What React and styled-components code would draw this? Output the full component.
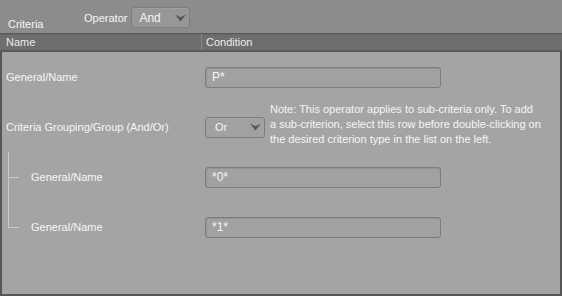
import React from 'react'
import styled, { createGlobalStyle } from 'styled-components'

const GlobalStyle = createGlobalStyle`
  html, body {
    margin: 0;
    padding: 0;
    background: #a4a4a4;
  }
  * {
    box-sizing: border-box;
  }
`

const Page = styled.div`
  width: 562px;
  height: 296px;
  display: flex;
  flex-direction: column;
  font-family: "Liberation Sans", Arial, sans-serif;
  font-size: 11px;
  color: #f6f6f6;
  overflow: hidden;
`

const TopBar = styled.div`
  height: 33px;
  flex: none;
  background: #8c8c8c;
  display: flex;
  align-items: flex-start;
  padding-left: 8px;
`

const Title = styled.div`
  margin-top: 18px;
  width: 76px;
`

const OperatorGroup = styled.div`
  display: flex;
  align-items: center;
  gap: 4px;
  margin-top: 7px;
`

const Select = styled.div`
  width: ${p => p.$width}px;
  height: 21px;
  display: flex;
  align-items: center;
  justify-content: space-between;
  padding: 0 3px 0 ${p => p.$pad}px;
  border: 1px solid ${p => p.$border};
  border-radius: 3px;
  background: ${p => p.$bg};
  box-shadow: inset 0 1px 0 rgba(255, 255, 255, 0.08);
  font-size: ${p => p.$size}px;
`

const Arrow = () => (
  <svg width="11" height="8" viewBox="0 0 11 8">
    <path d="M0 0.5 L5.5 3.2 L11 0.5 L5.5 7.5 Z" fill="#555" />
  </svg>
)

const Table = styled.div`
  flex: 1;
  display: flex;
  flex-direction: column;
  border-left: 2px solid #565656;
  border-right: 2px solid #565656;
  border-bottom: 2px solid #565656;
`

const HeaderRow = styled.div`
  height: 19px;
  flex: none;
  display: grid;
  grid-template-columns: 201px 1fr;
  background: #6e6e6e;
  border-top: 1px solid #595959;
  border-bottom: 2px solid #5a5a5a;
  margin-left: -2px;
  margin-right: -2px;
  box-shadow: inset 0 1px 0 #666;
`

const HeaderCell = styled.div`
  display: flex;
  align-items: center;
  padding-left: ${p => p.$pad}px;
  border-left: ${p => (p.$divider ? '1px solid #8a8a8a' : 'none')};
  color: #ececec;
`

const Body = styled.div`
  flex: 1;
  display: flex;
  flex-direction: column;
  background: #a4a4a4;
`

const Row = styled.div`
  height: 50px;
  display: grid;
  grid-template-columns: 203px 1fr;
  align-items: center;
`

const NameCell = styled.div`
  position: relative;
  height: 100%;
  display: flex;
  align-items: center;
  padding-left: ${p => (p.$branch ? 29 : 4)}px;

  &::before {
    content: ${p => (p.$branch ? "''" : 'none')};
    position: absolute;
    left: 6px;
    top: 0;
    width: 1px;
    height: ${p => (p.$branch === 'last' ? '50%' : '100%')};
    background: #c9c9c9;
  }

  &::after {
    content: ${p => (p.$branch ? "''" : 'none')};
    position: absolute;
    left: 6px;
    top: 50%;
    width: 11px;
    height: 1px;
    background: #c9c9c9;
  }
`

const ConditionCell = styled.div`
  display: flex;
  align-items: center;
  gap: 5px;
`

const TextBox = styled.div`
  width: 236px;
  height: 21px;
  display: flex;
  align-items: center;
  padding-left: 6px;
  border: 1px solid #7c7c7c;
  border-radius: 3px;
  background: #a1a1a1;
  box-shadow: inset 0 1px 0 #949494, inset 1px 0 0 #969696;
  font-size: 12px;
`

const Note = styled.div`
  line-height: 15px;
  font-size: 11px;
  white-space: nowrap;
  margin-top: -6px;
`

const rows = [
  { name: 'General/Name', value: 'P*' },
  { name: 'Criteria Grouping/Group (And/Or)', op: 'Or' },
  { name: 'General/Name', value: '*0*', branch: 'mid' },
  { name: 'General/Name', value: '*1*', branch: 'last' },
]

const App = () => {
  return (
    <Page>
      <GlobalStyle />
      <TopBar>
        <Title>Criteria</Title>
        <OperatorGroup>
          <span>Operator</span>
          <Select $width={59} $pad={7} $border="#7e7e7e" $bg="#979797" $size={12}>
            <span>And</span>
            <Arrow />
          </Select>
        </OperatorGroup>
      </TopBar>
      <Table>
        <HeaderRow>
          <HeaderCell $pad={6}>Name</HeaderCell>
          <HeaderCell $pad={4} $divider>Condition</HeaderCell>
        </HeaderRow>
        <Body>
          {rows.map((r, i) => (
            <Row key={i}>
              <NameCell $branch={r.branch}>{r.name}</NameCell>
              <ConditionCell>
                {r.op ? (
                  <>
                    <Select $width={60} $pad={9} $border="#7c7c7c" $bg="#a1a1a1" $size={11}>
                      <span>{r.op}</span>
                      <Arrow />
                    </Select>
                    <Note>
                      Note: This operator applies to sub-criteria only. To add<br />
                      a sub-criterion, select this row before double-clicking on<br />
                      the desired criterion type in the list on the left.
                    </Note>
                  </>
                ) : (
                  <TextBox>{r.value}</TextBox>
                )}
              </ConditionCell>
            </Row>
          ))}
        </Body>
      </Table>
    </Page>
  )
}

export default App
